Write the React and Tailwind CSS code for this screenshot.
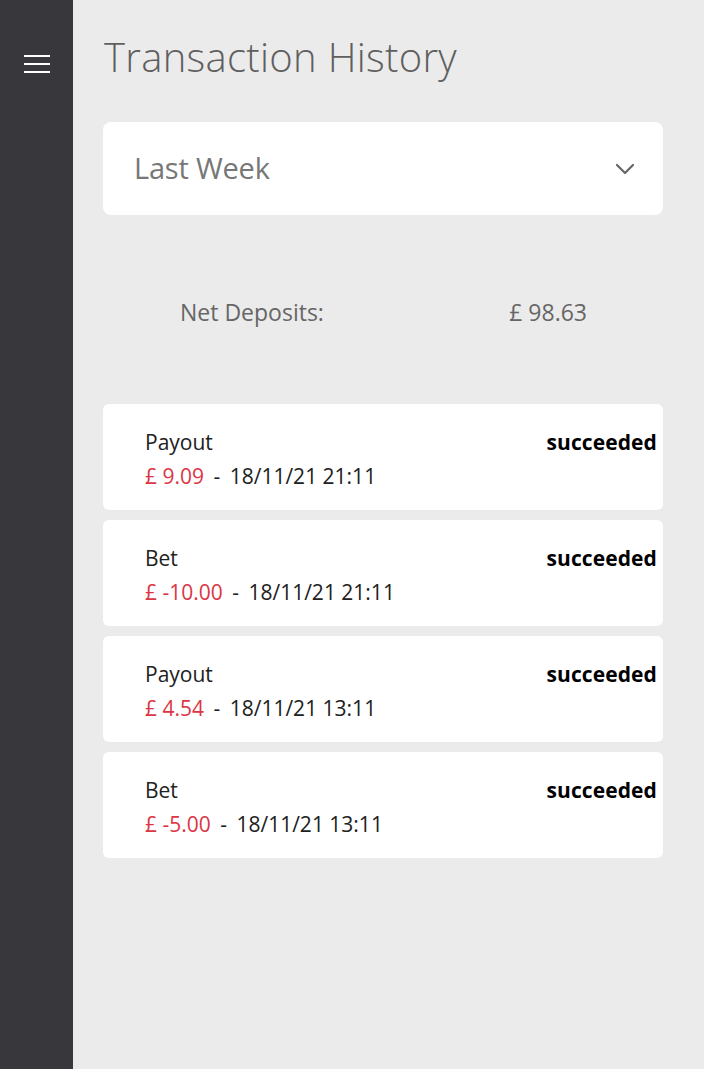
import React from "react";

const transactions = [
  { type: "Payout", amount: "£ 9.09", date: "18/11/21 21:11", status: "succeeded" },
  { type: "Bet", amount: "£ -10.00", date: "18/11/21 21:11", status: "succeeded" },
  { type: "Payout", amount: "£ 4.54", date: "18/11/21 13:11", status: "succeeded" },
  { type: "Bet", amount: "£ -5.00", date: "18/11/21 13:11", status: "succeeded" },
];

export default function App() {
  return (
    <div
      className="flex min-h-screen"
      style={{ fontFamily: '"Open Sans", "Noto Sans", sans-serif' }}
    >
      <aside className="w-[73px] shrink-0 bg-[#38373c] flex justify-center pt-[55px]">
        <button type="button" className="flex flex-col gap-[6px] h-fit" aria-label="Menu">
          <span className="block w-[26px] h-[2px] bg-white" />
          <span className="block w-[26px] h-[2px] bg-white" />
          <span className="block w-[26px] h-[2px] bg-white" />
        </button>
      </aside>

      <main className="flex-1 bg-[#ebebeb] pl-[30px] pr-[41px] pt-[31px]">
        <h1 className="text-[40px] leading-[52px] font-light text-[#5f5f5f] tracking-[0.3px] pl-[1px]">
          Transaction History
        </h1>

        <div className="mt-[39px] h-[93px] bg-white rounded-lg flex items-center justify-between pl-[31px] pr-[28px]">
          <span className="text-[29px] text-[#777] tracking-[-0.2px] pb-[2px]">Last Week</span>
          <svg width="20" height="12" viewBox="0 0 20 12" fill="none" stroke="#666" strokeWidth="2.2" strokeLinecap="round" strokeLinejoin="round">
            <path d="M2 2l8 8 8-8" />
          </svg>
        </div>

        <div className="mt-[82px] flex justify-between pl-[77px] pr-[76px] text-[23px] text-[#666] leading-[30px]">
          <span>Net Deposits:</span>
          <span>£ 98.63</span>
        </div>

        <div className="mt-[77px] flex flex-col gap-[10px]">
          {transactions.map((t, i) => (
            <div
              key={i}
              className="bg-white rounded-md flex justify-between pl-[42px] pr-[6px] pt-[21px] pb-[17px] text-[21px] leading-[34px]"
            >
              <div className="text-[#212121]">
                <div>{t.type}</div>
                <div>
                  <span className="text-[#dc3545]">{t.amount}</span>
                  <span className="px-[4px]"> - </span>
                  {t.date}
                </div>
              </div>
              <div className="font-bold text-black tracking-[0.1px]">{t.status}</div>
            </div>
          ))}
        </div>
      </main>
    </div>
  );
}
